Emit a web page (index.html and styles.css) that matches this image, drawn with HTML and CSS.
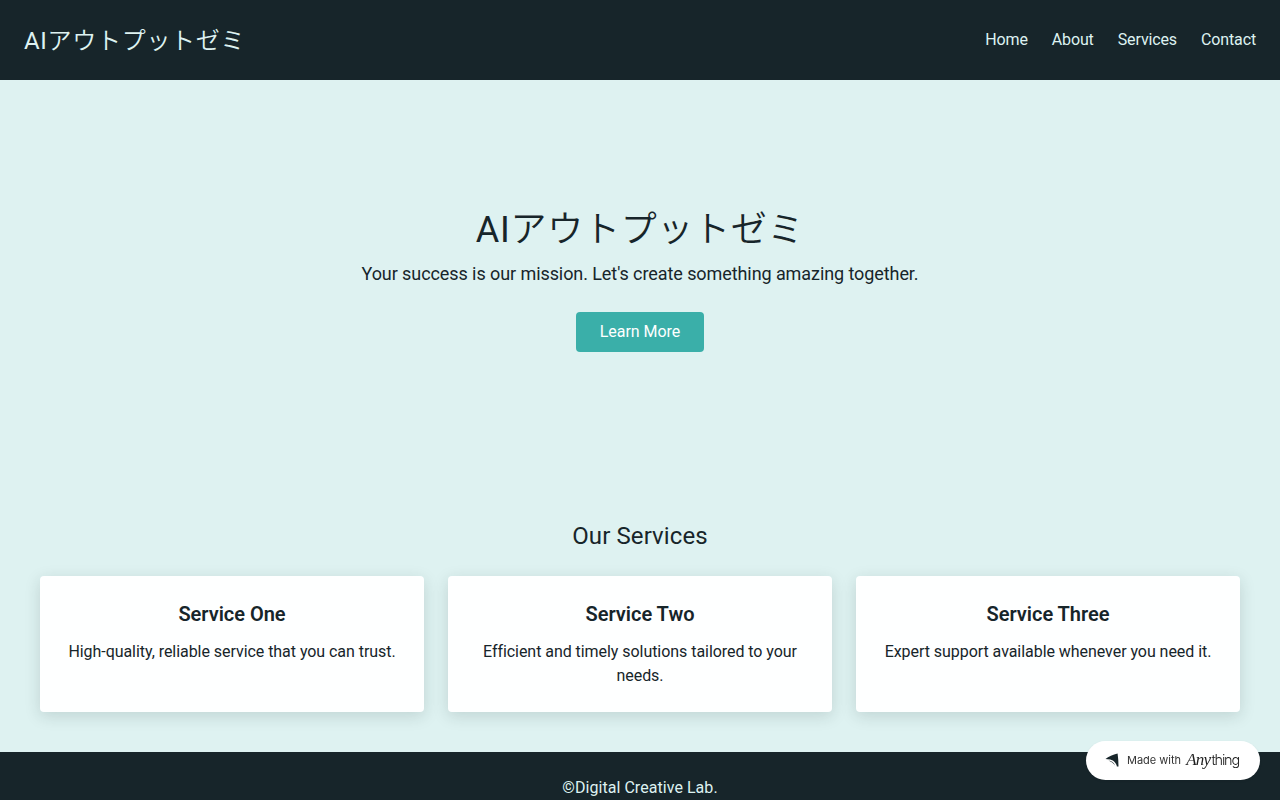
FILE: index.html
```html
<!DOCTYPE html>
<html lang="en">
<head>
<meta charset="utf-8">
<title>AIアウトプットゼミ</title>
<link rel="stylesheet" href="styles.css">
</head>
<body>
<header class="topbar">
  <div class="logo">AI<span class="kana">アウトプットゼミ</span></div>
  <nav class="nav">
    <a href="#">Home</a>
    <a href="#">About</a>
    <a href="#">Services</a>
    <a href="#">Contact</a>
  </nav>
</header>
<main>
  <section class="hero">
    <h1>AI<span class="kana">アウトプットゼミ</span></h1>
    <p>Your success is our mission. Let's create something amazing together.</p>
    <a class="cta" href="#">Learn More</a>
  </section>
  <section class="services">
    <h2>Our Services</h2>
    <div class="cards">
      <article class="card">
        <h3>Service One</h3>
        <p>High-quality, reliable service that you can trust.</p>
      </article>
      <article class="card">
        <h3>Service Two</h3>
        <p>Efficient and timely solutions tailored to your needs.</p>
      </article>
      <article class="card">
        <h3>Service Three</h3>
        <p>Expert support available whenever you need it.</p>
      </article>
    </div>
  </section>
</main>
<footer class="footer">©Digital Creative Lab.</footer>
<a class="badge" href="#">
  <svg class="badge-icon" width="14" height="14" viewBox="0 0 14 14" aria-hidden="true">
    <path d="M.5 6 C3.5 3.6 8 1.2 12.6 .4 C13.2 4.6 13.5 9.2 13.5 13.6 L11.9 13.6 C11.4 10.6 9 7.4 5.2 6.6 C3.4 6.2 1.8 6 .5 6 Z" fill="#17252a"/>
    <path d="M3.4 7.6 C6.4 7.8 9 9.6 10 12.4 C8.6 10.6 6.2 8.6 3.4 7.6 Z" fill="#17252a"/>
  </svg>
  <span class="badge-made">Made with</span>
  <span class="badge-brand"><i>Any</i>thing</span>
</a>
</body>
</html>
```
FILE: styles.css
```css
* { box-sizing: border-box; }
html, body { margin: 0; padding: 0; }
body {
  background: #def2f1;
  color: #17252a;
  font-family: Roboto, "Noto Sans CJK JP", sans-serif;
  font-size: 16px;
  line-height: 24px;
}
.topbar {
  height: 80px;
  padding: 0 24px;
  background: #17252a;
  color: #def2f1;
  display: flex;
  align-items: center;
  justify-content: space-between;
}
.kana { font-weight: 350; }
.logo { font-size: 24px; line-height: 36px; letter-spacing: 0.7px; padding-top: 2px; }
.nav { display: flex; gap: 24px; letter-spacing: -0.13px; }
.nav a { color: #def2f1; text-decoration: none; }
.hero {
  padding: 120px 16px;
  text-align: center;
}
.hero h1 {
  margin: 0;
  font-size: 36px;
  line-height: 60px;
  font-weight: 400;
  letter-spacing: 0.7px;
}
.hero p {
  margin: 0 0 24px;
  font-size: 18px;
  line-height: 28px;
  letter-spacing: -0.08px;
}
.cta {
  display: inline-block;
  height: 40px;
  padding: 8px 24px;
  border-radius: 4px;
  background: #3aafa9;
  color: #feffff;
  text-decoration: none;
  letter-spacing: -0.05px;
}
.services { padding: 48px 40px 40px; }
.services h2 {
  margin: 0 0 24px;
  font-size: 24px;
  line-height: 32px;
  font-weight: 400;
  letter-spacing: 0.1px;
  text-align: center;
}
.cards { display: grid; grid-template-columns: repeat(3, 1fr); gap: 24px; }
.card {
  padding: 24px;
  background: #feffff;
  border-radius: 4px;
  box-shadow: 0 4px 16px rgba(23, 37, 42, 0.15);
  text-align: center;
}
.card h3 {
  margin: 0 0 12px;
  font-size: 20px;
  line-height: 28px;
  font-weight: 600;
  letter-spacing: -0.02px;
}
.card p { margin: 0; letter-spacing: -0.05px; }
.footer {
  padding: 24px;
  background: #17252a;
  color: #def2f1;
  text-align: center;
  letter-spacing: 0.05px;
}
.badge {
  position: fixed;
  right: 20px;
  bottom: 20px;
  width: 174px;
  height: 39px;
  border-radius: 20px;
  background: #fff;
  display: flex;
  align-items: center;
  padding: 0 0 1px 19px;
  text-decoration: none;
  color: #17252a;
  box-shadow: 0 1px 3px rgba(0, 0, 0, 0.08);
}
.badge-icon { flex: none; margin-right: 8px; }
.badge-made {
  font-family: Inter, sans-serif;
  font-size: 11px;
  line-height: 16px;
  color: #333;
  margin-right: 5px;
}
.badge-brand {
  font-family: Inter, sans-serif;
  font-size: 14.5px;
  line-height: 18px;
  letter-spacing: -1.2px;
  font-weight: 300;
  color: #222;
}
.badge-brand i {
  font-family: "Liberation Serif", serif;
  font-size: 17px;
  letter-spacing: -0.7px;
  margin-right: 1px;
}
```
